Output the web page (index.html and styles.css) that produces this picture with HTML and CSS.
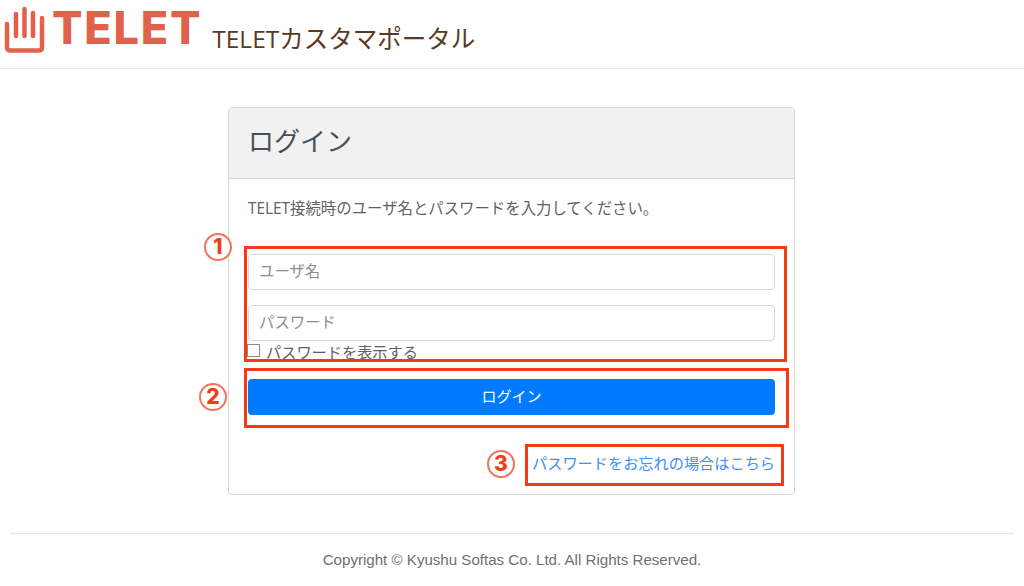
FILE: index.html
```html
<!DOCTYPE html>
<html lang="ja">
<head>
    <meta charset="UTF-8">
    <meta name="viewport" content="width=device-width, initial-scale=1.0">
    <title>TELETカスタマポータル</title>
    <link rel="stylesheet" href="styles.css">
</head>
<body>
    <header class="site-header">
        <svg class="logo-hand" width="44" height="48" viewBox="0 0 44 48" fill="none" stroke="#e2614b" stroke-linecap="round" stroke-linejoin="round">
            <path d="M3 18 V41 Q3 44.500 6.500 44.500 H34.500 Q38 44.500 38 41 V12" stroke-width="4.500"/>
            <path d="M12 30 V8 M20.500 30 V3 M29 30 V7" stroke-width="4.500"/>
        </svg>
        <span class="logo-text">TELET</span>
        <span class="portal-name">TELETカスタマポータル</span>
    </header>

    <main class="login-card">
        <h1 class="card-title">ログイン</h1>
        <div class="card-body">
            <p class="lead">TELET接続時のユーザ名とパスワードを入力してください。</p>
            <input class="field field-user" type="text" placeholder="ユーザ名">
            <input class="field field-pass" type="password" placeholder="パスワード">
            <label class="show-pass"><span class="check-box"></span>パスワードを表示する</label>
            <button class="login-btn" type="button">ログイン</button>
            <div class="forgot"><a href="#">パスワードをお忘れの場合はこちら</a></div>
        </div>

        <!-- annotations on top of the form -->
        <div class="mark mark-1"></div>
        <div class="mark mark-2"></div>
        <div class="mark mark-3"></div>
        <span class="num num-1">1</span>
        <span class="num num-2">2</span>
        <span class="num num-3">3</span>
    </main>

    <footer class="site-footer">Copyright © Kyushu Softas Co. Ltd. All Rights Reserved.</footer>
</body>
</html>
```

FILE: styles.css
```css
* {
    box-sizing: border-box;
}
body {
    margin: 0;
    background-color: white;
    color: #5a6268;
    font-family: "Open Sans", "Noto Sans CJK JP", sans-serif;
}
.site-header {
    display: flex;
    align-items: flex-start;
    height: 69px;
    padding: 6px 0 0 4px;
    border-bottom: 1px solid #e6e6e6;
}
.logo-hand {
    flex: none;
}
.logo-text {
    margin: -2px 0 0 4px;
    color: #e2614b;
    font-family: "Inter", sans-serif;
    font-size: 45px;
    font-weight: 800;
    line-height: 48px;
    letter-spacing: 1.800px;
}
.portal-name {
    margin: 18px 0 0 10px;
    color: #5a3a22;
    font-family: "Open Sans", "Noto Sans CJK JP", sans-serif;
    font-size: 24.500px;
    line-height: 30px;
}
.login-card {
    position: relative;
    width: 567px;
    height: 388px;
    margin: 38px 0 0 228px;
    border: 1px solid #d6d6d6;
    border-radius: 4px;
}
.card-title {
    height: 71px;
    margin: 0;
    padding: 15px 19px;
    background-color: #f1f1f1;
    border-bottom: 1px solid #dcdcdc;
    color: #47505a;
    font-size: 26px;
    font-weight: 400;
    line-height: 36px;
}
.card-body {
    padding: 19px 19px 0;
}
.lead {
    margin: 0;
    font-size: 15.400px;
    line-height: 21px;
}
.field {
    display: block;
    width: 527px;
    height: 36px;
    padding: 0 11px 2px 10px;
    border: 1px solid #d4d8dc;
    border-radius: 4px;
    font-family: inherit;
    font-size: 15.400px;
}
.field::placeholder {
    color: #868e96;
}
.field-user {
    margin-top: 35px;
}
.field-pass {
    margin-top: 15px;
}
.show-pass {
    display: flex;
    align-items: center;
    height: 21px;
    margin: -1px 0 0 -1px;
    font-size: 15.200px;
    color: #5a6268;
}
.check-box {
    width: 13px;
    height: 13px;
    margin-right: 6px;
    border: 1px solid #8a8a8a;
}
.login-btn {
    display: block;
    width: 527px;
    height: 36px;
    margin-top: 18px;
    padding: 0 0 3px;
    border: none;
    border-radius: 4px;
    background-color: #007bff;
    color: white;
    font-family: inherit;
    font-size: 15px;
}
.forgot {
    margin-top: 37px;
    text-align: right;
    font-size: 15.200px;
    line-height: 22px;
}
.forgot a {
    color: #3c90f6;
    text-decoration: none;
}
.mark {
    position: absolute;
    border: 3px solid #f23c16;
}
.mark-1 {
    left: 15px;
    top: 138px;
    width: 543px;
    height: 116px;
}
.mark-2 {
    left: 15px;
    top: 260px;
    width: 545px;
    height: 60px;
}
.mark-3 {
    left: 296px;
    top: 336px;
    width: 259px;
    height: 42px;
}
.num {
    position: absolute;
    width: 28px;
    height: 28px;
    border: 2px solid #f4735c;
    border-radius: 50%;
    background-color: white;
    color: #f23c16;
    font-family: "Inter", sans-serif;
    font-size: 21px;
    font-weight: 800;
    line-height: 24px;
    text-align: center;
}
.num-1 {
    left: -25px;
    top: 125px;
}
.num-2 {
    left: -30px;
    top: 275px;
}
.num-3 {
    left: 258px;
    top: 342px;
}
.site-footer {
    margin: 38px 10px 0;
    padding-top: 16px;
    border-top: 1px solid #e6e6e6;
    color: #707070;
    font-family: "Liberation Sans", sans-serif;
    font-size: 15.100px;
    line-height: 20px;
    text-align: center;
}
```
